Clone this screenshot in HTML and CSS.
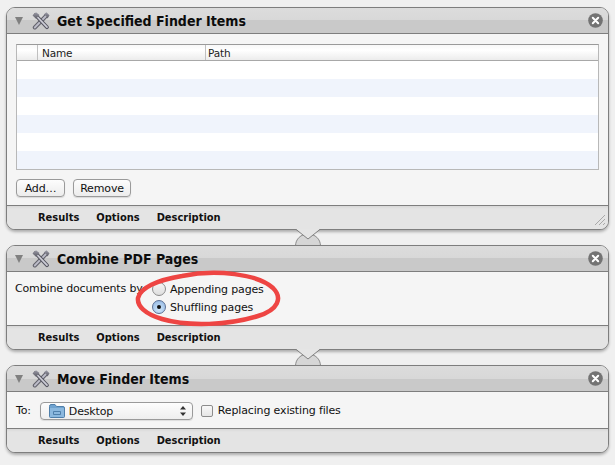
FILE: index.html
```html
<!DOCTYPE html>
<html lang="en">
<head>
<meta charset="utf-8">
<title>Automator workflow</title>
<link rel="stylesheet" href="styles.css">
</head>
<body>
<svg width="0" height="0" class="defs">
  <defs>
    <linearGradient id="steel" x1="0" y1="0" x2="0" y2="1"><stop offset="0" stop-color="#9a9aa6"/><stop offset="1" stop-color="#5c5c66"/></linearGradient>
    <symbol id="tools" viewBox="0 0 18 18">
      <path d="M2.800 15.500 14 4" stroke="#62626c" stroke-width="4" stroke-linecap="round"/>
      <path d="M2.800 15.500 14 4" stroke="#bcbcc8" stroke-width="1.800" stroke-linecap="round"/>
      <path d="M3.500 3 15 15.200" stroke="#565660" stroke-width="3.800" stroke-linecap="round"/>
      <path d="M3.500 3 15 15.200" stroke="#ccccd6" stroke-width="1.700" stroke-linecap="round"/>
      <path d="M.5 3.500 4 .3 7.500 3 4 6.800Z" fill="url(#steel)"/>
      <path d="M11.800 2.600 14.400.3 17.500 3.200 15.600 6.400 14.200 4Z" fill="url(#steel)"/>
    </symbol>
    <symbol id="close" viewBox="0 0 15 15">
      <circle cx="7.500" cy="7.500" r="7.300" fill="#737373"/>
      <path d="M4.800 4.800l5.400 5.400M10.200 4.800l-5.400 5.400" stroke="#fff" stroke-width="2" stroke-linecap="round"/>
    </symbol>
    <symbol id="link" viewBox="0 0 26 17">
      <path d="M.5 17C.5 10 6 5 13 5s12.500 5 12.500 12Z" fill="#d6d6d6" stroke="#8a8a8a"/>
      <path d="M1 0 13 10 25 0Z" fill="#e5e5e5"/>
      <path d="M.5 0 13 10 25.500 0" fill="none" stroke="#808080"/>
    </symbol>
  </defs>
</svg>
<main class="workflow">
  <section class="card">
    <header class="head">
      <span class="tri"></span>
      <svg class="tool"><use href="#tools"/></svg>
      <h2 class="title">Get Specified Finder Items</h2>
      <svg class="close"><use href="#close"/></svg>
    </header>
    <div class="body list-body">
      <div class="table">
        <div class="thead">
          <span class="th th-a"></span><span class="th th-b">Name</span><span class="th th-c">Path</span>
        </div>
        <div class="row"></div><div class="row alt"></div><div class="row"></div><div class="row alt"></div><div class="row"></div><div class="row alt"></div>
      </div>
      <div class="buttons">
        <button class="btn btn-add">Add…</button>
        <button class="btn btn-rem">Remove</button>
      </div>
    </div>
    <footer class="foot">
      <span>Results</span><span>Options</span><span>Description</span>
      <svg class="grip" width="12" height="12" viewBox="0 0 12 12"><path d="M1 11 11 1M5 11l6-6M9 11l2-2" stroke="#a8a8a8" fill="none"/></svg>
    </footer>
    <svg class="link"><use href="#link"/></svg>
  </section>

  <section class="card">
    <header class="head">
      <span class="tri"></span>
      <svg class="tool"><use href="#tools"/></svg>
      <h2 class="title">Combine PDF Pages</h2>
      <svg class="close"><use href="#close"/></svg>
    </header>
    <div class="body combine-body">
      <span class="lbl combine-label">Combine documents by:</span>
      <div class="radios">
        <label class="opt"><span class="radio"></span>Appending pages</label>
        <label class="opt"><span class="radio on"></span>Shuffling pages</label>
      </div>
    </div>
    <footer class="foot">
      <span>Results</span><span>Options</span><span>Description</span>
    </footer>
    <svg class="link"><use href="#link"/></svg>
  </section>

  <section class="card">
    <header class="head">
      <span class="tri"></span>
      <svg class="tool"><use href="#tools"/></svg>
      <h2 class="title">Move Finder Items</h2>
      <svg class="close"><use href="#close"/></svg>
    </header>
    <div class="body move-body">
      <span class="lbl">To:</span>
      <div class="select">
        <svg class="folder" width="16" height="14" viewBox="0 0 16 14">
          <path d="M.5 2.500q0-2 1.500-2h4l1.500 2h6.500q1.500 0 1.500 1.500v8.500q0 1-1 1h-13q-1 0-1-1Z" fill="#6fa3d0" stroke="#4f7faa"/>
          <rect x="1" y="4" width="14" height="9" fill="#8bb8de"/>
          <path d="M4.500 7.500h7v3h-7Z" fill="none" stroke="#4f7faa"/>
        </svg>
        <span class="sel-text">Desktop</span>
        <svg class="updown" width="6" height="10" viewBox="0 0 6 10"><path d="M3 0 6 3.500H0ZM3 10 0 6.500H6Z" fill="#333"/></svg>
      </div>
      <span class="check"></span>
      <span class="lbl">Replacing existing files</span>
    </div>
    <footer class="foot">
      <span>Results</span><span>Options</span><span>Description</span>
    </footer>
  </section>
</main>
<svg class="circle" width="160" height="64" viewBox="0 0 160 64">
  <path d="M52 8C86 1 128 6 143 20c10 10 5 22-15 28-29 9-69 11-96 3C15 46 7 38 8 30 10 20 27 12 52 8Z" fill="none" stroke="#ee4543" stroke-width="4.500"/>
</svg>
</body>
</html>
```
FILE: styles.css
```css
* { box-sizing: border-box; }
html, body { margin: 0; padding: 0; }
body {
  width: 615px; height: 465px; overflow: hidden; position: relative;
  background: #f0f0f0;
  font-family: "DejaVu Sans", sans-serif; font-size: 11px; letter-spacing: -.15px; color: #111;
}
.defs { position: absolute; }
.workflow { display: flex; flex-direction: column; gap: 15px; padding: 7px 6px 0; }
.card {
  position: relative; display: flex; flex-direction: column;
  border: 1px solid #7e7e7e; border-radius: 9px;
  background: #f5f5f5;
  box-shadow: 0 2px 3px rgba(0,0,0,.28);
}
.head {
  height: 26px; display: flex; align-items: center; padding: 0 5px 0 8px;
  border-bottom: 1px solid #7e7e7e; border-radius: 8px 8px 0 0;
  background: linear-gradient(#dcdcdc 0, #d8d8d8 50%, #c9c9c9 50%, #c9c9c9 100%);
}
.tri {
  width: 0; height: 0; margin-top: 1px;
  border-left: 4.500px solid transparent; border-right: 4.500px solid transparent;
  border-top: 8px solid #808080;
}
.tool { width: 18px; height: 18px; margin-left: 9px; }
.title {
  margin: 0 0 0 7px; flex: 1;
  font-family: "DejaVu Sans Condensed", "DejaVu Sans", sans-serif;
  font-size: 14px; font-weight: 700; letter-spacing: 0; color: #0c0c0c;
}
.close { width: 15px; height: 15px; }
.body { border-bottom: 1px solid #7e7e7e; }
.list-body { height: 172px; padding: 10px 9px 0; }
.table { border: 1px solid #b8b8b8; border-top-color: #9a9a9a; background: #fff; }
.thead {
  display: flex; height: 16px;
  border-bottom: 1px solid #a8a8a8;
  background: linear-gradient(#f8f8f8, #fff 35%, #ececec);
}
.th { display: flex; align-items: center; padding-left: 4px; border-left: 1px solid #c0c0c0; font-size: 10.500px; color: #222; height: 15px; }
.th-a { width: 20px; border-left: 0; }
.th-b { width: 168px; }
.th-c { flex: 1; padding-left: 2px; }
.row { height: 18px; background: #fff; }
.alt { background: #f0f4fc; }
.buttons { display: flex; gap: 8px; margin-top: 9px; }
.btn {
  height: 18px; padding: 0; border: 1px solid #9a9a9a; border-radius: 4px;
  background: linear-gradient(#fdfdfd, #ececec);
  font: 11px "DejaVu Sans", sans-serif; letter-spacing: -.15px; color: #111;
  box-shadow: 0 1px 1px rgba(0,0,0,.12);
}
.btn-add { width: 49px; }
.btn-rem { width: 58px; }
.foot {
  position: relative; height: 23px; display: flex; align-items: center; gap: 17px;
  padding: 0 0 1px 31px;
  border-radius: 0 0 8px 8px;
  background: linear-gradient(#d8d8d8, #e4e4e4 3px, #e4e4e4);
  font-family: "DejaVu Sans Condensed", "DejaVu Sans", sans-serif;
  font-weight: 700; font-size: 11px; letter-spacing: 0; color: #111;
}
.grip { position: absolute; right: 2px; bottom: 3px; }
.link { position: absolute; width: 26px; height: 17px; left: 288px; bottom: -17px; }
.combine-body { height: 54px; display: flex; padding: 8px 0 0 8px; }
.lbl { line-height: 18px; }
.combine-label { width: 137px; }
.radios { display: flex; flex-direction: column; }
.opt { display: flex; align-items: center; gap: 4px; height: 18px; }
.radio {
  width: 14px; height: 14px; border-radius: 50%; border: 1px solid #8c8c8c;
  background: linear-gradient(#f6f6f6, #dedede);
  display: flex; align-items: center; justify-content: center;
}
.radio.on { border-color: #5a6f94; background: radial-gradient(circle at 50% 70%, #cfe6fb, #8fb4e0); }
.radio.on::after { content: ""; width: 4px; height: 4px; border-radius: 50%; background: #111; }
.move-body { height: 37px; display: flex; align-items: center; padding: 2px 0 0 9px; }
.select {
  width: 153px; height: 18px; margin-left: 9px; display: flex; align-items: center;
  border: 1px solid #9a9a9a; border-radius: 4px;
  background: linear-gradient(#fdfdfd, #eeeeee);
  padding: 0 6px 0 8px;
  box-shadow: 0 1px 1px rgba(0,0,0,.1);
}
.sel-text { margin-left: 4px; flex: 1; }
.check {
  width: 12px; height: 12px; margin: 0 5px 0 8px;
  border: 1px solid #8c8c8c; border-radius: 2px;
  background: linear-gradient(#f8f8f8, #e6e6e6);
}
.circle { position: absolute; left: 130px; top: 268px; }
```
